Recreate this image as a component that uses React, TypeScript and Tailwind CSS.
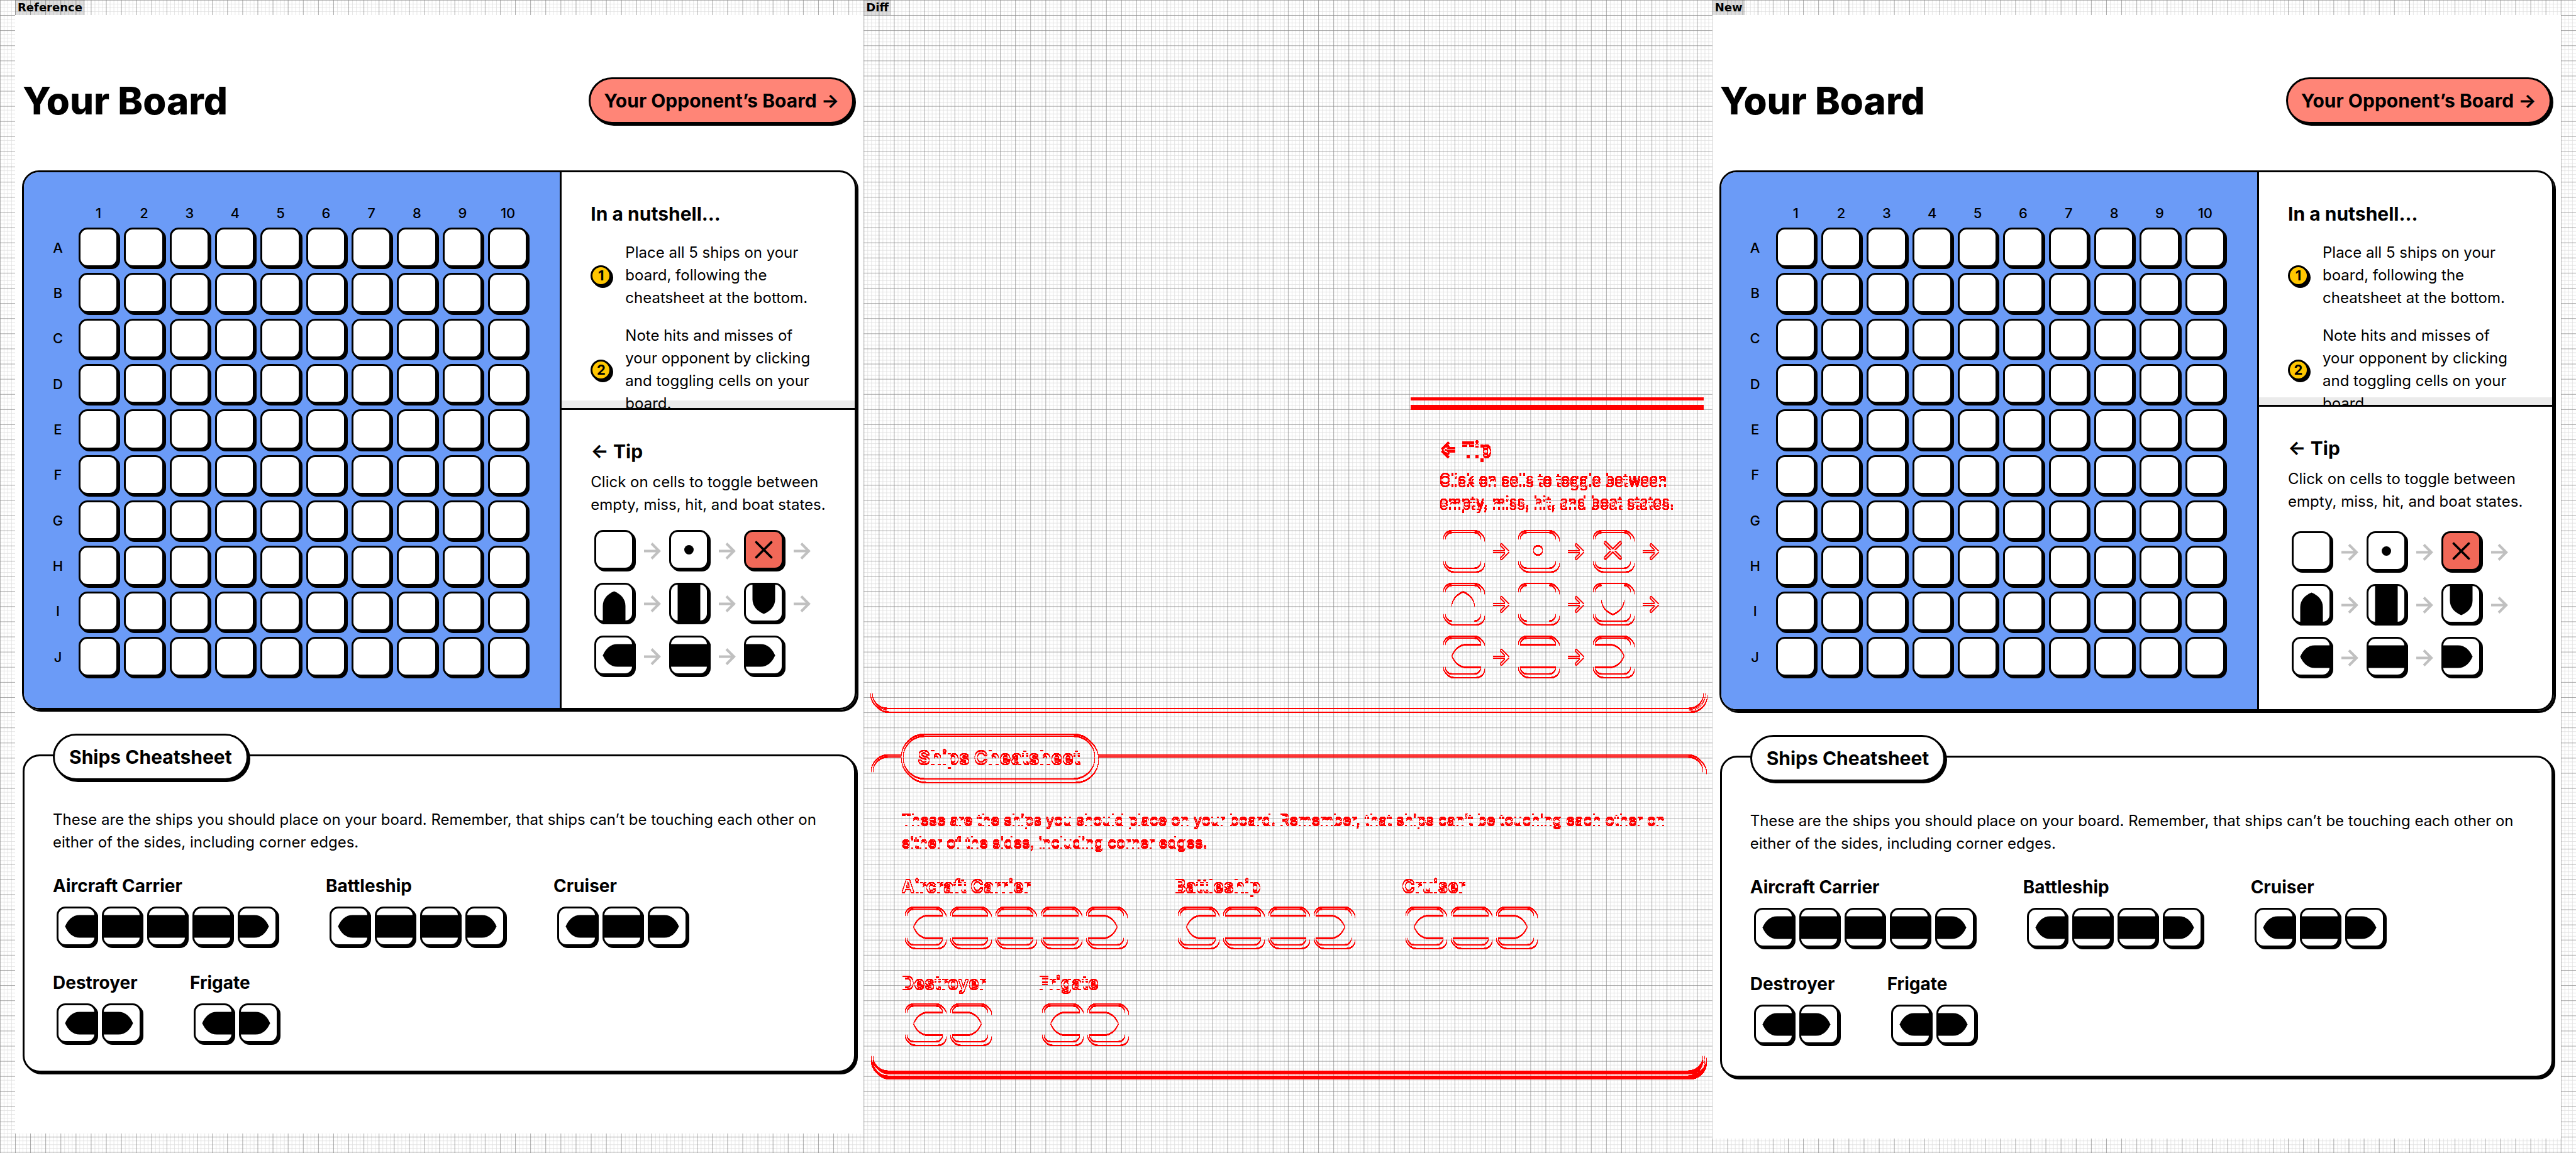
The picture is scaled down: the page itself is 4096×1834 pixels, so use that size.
import { useState, type ReactNode } from "react";

type CellState =
  | "empty"
  | "miss"
  | "hit"
  | "bow-up"
  | "hull-vertical"
  | "bow-down"
  | "bow-left"
  | "hull-horizontal"
  | "bow-right";

const CYCLE: CellState[] = [
  "empty",
  "miss",
  "hit",
  "bow-up",
  "hull-vertical",
  "bow-down",
  "bow-left",
  "hull-horizontal",
  "bow-right",
];

const COLUMNS = ["1", "2", "3", "4", "5", "6", "7", "8", "9", "10"];
const ROWS = ["A", "B", "C", "D", "E", "F", "G", "H", "I", "J"];

const SHIPS = [
  { name: "Aircraft Carrier", size: 5 },
  { name: "Battleship", size: 4 },
  { name: "Cruiser", size: 3 },
  { name: "Destroyer", size: 2 },
  { name: "Frigate", size: 2 },
];

const BOW_LEFT = "M18 42C24 28 34 18 49 18H88V66H49C34 66 24 56 18 42Z";
const BOW_UP = "M42 18C56 24 66 34 66 49V88H18V49C18 34 28 24 42 18Z";
const BOW_DOWN = "M42 66C56 60 66 50 66 35V0H18V35C18 50 28 60 42 66Z";
const BOW_RIGHT = "M66 42C60 28 50 18 35 18H0V66H35C50 66 60 56 66 42Z";

function CellMark({ state }: { state: CellState }) {
  if (state === "empty") return null;
  return (
    <svg
      viewBox="0 0 84 84"
      aria-hidden="true"
      className="pointer-events-none absolute -inset-[3px] h-[63px] w-[63px] overflow-visible"
    >
      {state === "miss" && <circle cx="42" cy="42" r="10" />}
      {state === "hit" && (
        <path d="M26 26L58 58M58 26L26 58" stroke="#000" strokeWidth="5" strokeLinecap="round" />
      )}
      {state === "bow-up" && <path d={BOW_UP} />}
      {state === "hull-vertical" && <path d="M18 0H66V88H18Z" />}
      {state === "bow-down" && <path d={BOW_DOWN} />}
      {state === "bow-left" && <path d={BOW_LEFT} />}
      {state === "hull-horizontal" && <path d="M0 18H88V66H0Z" />}
      {state === "bow-right" && <path d={BOW_RIGHT} />}
    </svg>
  );
}

function Cell({ state }: { state: CellState }) {
  return (
    <span
      className={
        "relative mr-[3px] mb-[3px] block size-[63px] shrink-0 rounded-[14px] border-[3px] border-black shadow-[3px_3px_0_#000] " +
        (state === "hit" ? "bg-[#f16858]" : "bg-white")
      }
    >
      <CellMark state={state} />
    </span>
  );
}

function BoardCell({ label }: { label: string }) {
  const [index, setIndex] = useState(0);
  const state = CYCLE[index];
  return (
    <button
      type="button"
      aria-label={label}
      onClick={() => setIndex((index + 1) % CYCLE.length)}
      className={
        "relative aspect-square cursor-pointer rounded-[14px] border-[3px] border-black shadow-[3px_3px_0_#000] " +
        (state === "hit" ? "bg-[#f16858]" : "bg-white")
      }
    >
      <CellMark state={state} />
    </button>
  );
}

function Arrow() {
  return (
    <svg viewBox="0 0 36 36" aria-hidden="true" className="size-[27px] shrink-0">
      <path d="M0 18H32M16 2L32 18L16 34" fill="none" stroke="#c0c0c0" strokeWidth="5.5" />
    </svg>
  );
}

function Playfield({ className }: { className: string }) {
  return (
    <div
      className={
        "grid flex-1 grid-cols-[48px_repeat(10,minmax(0,1fr))] gap-[9px] bg-[#6b9bf7] pt-[51px] pr-[51px] pl-[30px] text-[22px] leading-[28px] font-medium " +
        className
      }
    >
      <span />
      {COLUMNS.map((column) => (
        <span key={column} className="text-center">
          {column}
        </span>
      ))}
      {ROWS.map((row) => (
        <div key={row} className="contents">
          <span className="self-center text-center">{row}</span>
          {COLUMNS.map((column) => (
            <BoardCell key={column} label={row + column} />
          ))}
        </div>
      ))}
    </div>
  );
}

function Step({ number, children }: { number: number; children: ReactNode }) {
  return (
    <li className="flex items-center gap-[22px]">
      <span className="flex size-[33px] shrink-0 items-center justify-center rounded-full border-[3px] border-black bg-[#ffc700] text-[22px] leading-[27px] font-bold shadow-[3px_3px_0_#000]">
        {number}
      </span>
      <p className="text-[24px] leading-[36px]">{children}</p>
    </li>
  );
}

function Nutshell({ className }: { className: string }) {
  return (
    <section className={"relative overflow-hidden pt-[48px] pr-[60px] pl-[46px] " + className}>
      <h2 className="text-[30px] leading-[36px] font-bold">In a nutshell...</h2>
      <ol className="mt-[26px] flex flex-col gap-[24px]">
        <Step number={1}>Place all 5 ships on your board, following the cheatsheet at the bottom.</Step>
        <Step number={2}>
          Note hits and misses of your opponent by clicking and toggling cells on your board.
        </Step>
      </ol>
      <div className="absolute inset-x-0 bottom-0 h-[12px] bg-black/8" />
    </section>
  );
}

function TipText({ className }: { className: string }) {
  return (
    <div className={"pt-[48px] pl-[46px] " + className}>
      <h2 className="text-[30px] leading-[36px] font-bold">← Tip</h2>
      <p className="mt-[13px] pr-[36px] text-[24px] leading-[36px]">
        Click on cells to toggle between empty, miss, hit, and boat states.
      </p>
    </div>
  );
}

function StateLegend({ className }: { className: string }) {
  return (
    <div className={"flex flex-col gap-[18px] pl-[52px] " + className}>
      {[0, 3, 6].map((start) => (
        <div key={start} className="flex items-center gap-[13px]">
          {CYCLE.slice(start, start + 3).map((state, i) => (
            <div key={state} className="flex items-center gap-[13px]">
              <Cell state={state} />
              {start + i < CYCLE.length - 1 && <Arrow />}
            </div>
          ))}
        </div>
      ))}
    </div>
  );
}

function Pill({ children }: { children: ReactNode }) {
  return (
    <h2 className="relative -mt-[36px] w-fit rounded-full border-[3px] border-black bg-white px-[23px] py-[16px] text-[30px] leading-[36px] font-bold shadow-[3px_3px_0_#000]">
      {children}
    </h2>
  );
}

function Cheatsheet({ className }: { className: string }) {
  return (
    <section
      className={
        "mx-px rounded-[27px] border-[3px] border-black bg-white pr-[50px] pl-[45px] shadow-[3px_3px_0_#000] " +
        className
      }
    >
      <Pill>Ships Cheatsheet</Pill>
      <p className="mt-[45px] text-[24px] leading-[36px]">
        These are the ships you should place on your board. Remember, that ships can’t be touching
        each other on either of the sides, including corner edges.
      </p>
      <ul className="mt-[33px] mr-[40px] flex flex-wrap gap-x-[74px] gap-y-[37px]">
        {SHIPS.map((ship) => (
          <li key={ship.name}>
            <h3 className="text-[28px] leading-[36px] font-bold">{ship.name}</h3>
            <div className="mt-[15px] flex gap-[6px] pl-[6px]">
              {Array.from({ length: ship.size }, (_, i) => (
                <Cell
                  key={i}
                  state={i === 0 ? "bow-left" : i === ship.size - 1 ? "bow-right" : "hull-horizontal"}
                />
              ))}
            </div>
          </li>
        ))}
      </ul>
    </section>
  );
}

function Column({ title, children }: { title: string; children: ReactNode }) {
  return (
    <section>
      <h1 className="h-[24px] w-fit bg-black/13 px-[4px] font-['DejaVu_Sans'] text-[18px] leading-[24px] font-bold">
        {title}
      </h1>
      {children}
    </section>
  );
}

function Screen({
  playfieldClass,
  nutshellClass,
  legendClass,
  cheatsheetClass,
}: {
  playfieldClass: string;
  nutshellClass: string;
  legendClass: string;
  cheatsheetClass: string;
}) {
  return (
    <div className="bg-white px-[11px] pt-[99px] pb-[97px]">
      <header className="mb-[74px] flex items-center justify-between pr-[4px] pl-px">
        <h2 className="text-[60px] leading-[74px] font-extrabold">Your Board</h2>
        <button
          type="button"
          className="cursor-pointer rounded-full border-[3px] border-black bg-[#ff8577] px-[21px] py-[16px] text-[30px] leading-[36px] font-bold shadow-[3px_3px_0_#000]"
        >
          Your Opponent’s Board →
        </button>
      </header>
      <div className="flex overflow-hidden rounded-[27px] border-[3px] border-black shadow-[3px_3px_0_#000]">
        <Playfield className={playfieldClass} />
        <aside className="w-[469px] shrink-0 border-l-[3px] border-black">
          <Nutshell className={nutshellClass} />
          <div className="border-t-[3px] border-black">
            <TipText className="" />
            <StateLegend className={legendClass} />
          </div>
        </aside>
      </div>
      <Cheatsheet className={"mt-[71px] " + cheatsheetClass} />
    </div>
  );
}

/* Paints red wherever ink appears or disappears when content moves vertically. */
function MovedFilter({ id, dy }: { id: string; dy: number }) {
  return (
    <filter id={id} x="-5%" y="-20%" width="110%" height="140%" colorInterpolationFilters="sRGB">
      <feColorMatrix
        values="0 0 0 0 1  0 0 0 0 0  0 0 0 0 0  -0.5 -0.5 0 1 0"
        result="ink"
      />
      <feOffset in="ink" dy={dy} result="moved" />
      <feComposite in="ink" in2="moved" operator="arithmetic" k1={0} k2={1} k3={-1} k4={0} result="lost" />
      <feComposite in="moved" in2="ink" operator="arithmetic" k1={0} k2={1} k3={-1} k4={0} result="gained" />
      <feComposite in="lost" in2="gained" operator="arithmetic" k1={0} k2={7} k3={7} k4={0} />
    </filter>
  );
}

function Changes() {
  return (
    <div className="px-[11px] pt-[247px]">
      <svg aria-hidden="true" className="absolute size-0">
        <MovedFilter id="moved-up" dy={-5} />
        <MovedFilter id="moved-down" dy={2} />
        <MovedFilter id="moved-far" dy={8} />
      </svg>
      <div className="relative flex h-[858px] justify-end border-[3px] border-transparent">
        <div className="absolute -inset-[3px] rounded-[27px] border-[3px] border-black shadow-[3px_3px_0_#000] [clip-path:inset(820px_-8px_-8px_-8px)] [filter:url(#moved-down)]" />
        <div className="w-[466px] pt-[358px]">
          <div className="h-[5px] bg-[#ff0000]" />
          <div className="mt-[7px] h-[8px] bg-[#ff0000]" />
          <TipText className="[filter:url(#moved-up)]" />
          <StateLegend className="mt-[22px] [filter:url(#moved-down)]" />
        </div>
      </div>
      <div className="relative mt-[71px]">
        <Cheatsheet className="pb-[41px] [clip-path:inset(-60px_-8px_40px_-8px)] [filter:url(#moved-down)]" />
        <div className="absolute inset-x-px inset-y-0 rounded-[27px] border-[3px] border-black shadow-[3px_3px_0_#000] [clip-path:inset(476px_-8px_-16px_-8px)] [filter:url(#moved-far)]" />
      </div>
    </div>
  );
}

function lines(step: number, skip: number) {
  let d = "";
  for (let x = 0; x < 5440; x += step) if (!skip || x % skip) d += `M${x + 0.5} 0V2436`;
  for (let y = 0; y < 2436; y += step) if (!skip || y % skip) d += `M0 ${y + 0.5}H5440`;
  return d;
}

function GraphPaper() {
  return (
    <svg
      viewBox="0 0 5440 2436"
      preserveAspectRatio="none"
      aria-hidden="true"
      className="absolute inset-0 -z-10 h-full w-full"
    >
      <path d={lines(8, 32)} stroke="#dedede" fill="none" />
      <path d={lines(32, 0)} stroke="#8c8c8c" fill="none" />
    </svg>
  );
}

export default function App() {
  return (
    <main className="relative isolate min-h-screen bg-white px-[24px] pb-[24px] font-['Inter',sans-serif] text-black">
      <GraphPaper />
      <div className="grid grid-cols-3 items-start">
        <Column title="Reference">
          <Screen
            playfieldClass="pb-[50px]"
            nutshellClass="h-[375px]"
            legendClass="mt-[22px]"
            cheatsheetClass="pb-[41px]"
          />
        </Column>
        <Column title="Diff">
          <Changes />
        </Column>
        <Column title="New">
          <Screen
            playfieldClass="pb-[52px]"
            nutshellClass="h-[370px]"
            legendClass="mt-[29px]"
            cheatsheetClass="pb-[47px]"
          />
        </Column>
      </div>
    </main>
  );
}
